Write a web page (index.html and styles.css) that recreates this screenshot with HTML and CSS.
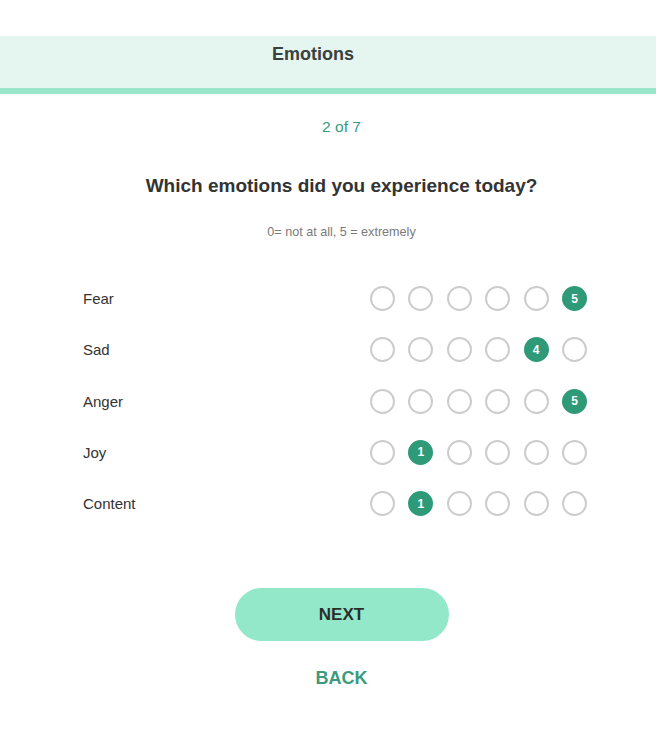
FILE: index.html
```html
<!DOCTYPE html>
<html>
<head>
<meta charset="utf-8">
<link rel="stylesheet" href="styles.css">
</head>
<body>
<div class="page">
  <header class="topbar"><h1 class="title">Emotions</h1></header>
  <div class="step shift">2 of 7</div>
  <h2 class="question shift">Which emotions did you experience today?</h2>
  <div class="hint shift">0= not at all, 5 = extremely</div>
  <div class="rows">
    <div class="row"><span class="label">Fear</span><div class="scale"><span class="dot"></span><span class="dot"></span><span class="dot"></span><span class="dot"></span><span class="dot"></span><span class="dot on">5</span></div></div>
    <div class="row"><span class="label">Sad</span><div class="scale"><span class="dot"></span><span class="dot"></span><span class="dot"></span><span class="dot"></span><span class="dot on">4</span><span class="dot"></span></div></div>
    <div class="row"><span class="label">Anger</span><div class="scale"><span class="dot"></span><span class="dot"></span><span class="dot"></span><span class="dot"></span><span class="dot"></span><span class="dot on">5</span></div></div>
    <div class="row"><span class="label">Joy</span><div class="scale"><span class="dot"></span><span class="dot on">1</span><span class="dot"></span><span class="dot"></span><span class="dot"></span><span class="dot"></span></div></div>
    <div class="row"><span class="label">Content</span><div class="scale"><span class="dot"></span><span class="dot on">1</span><span class="dot"></span><span class="dot"></span><span class="dot"></span><span class="dot"></span></div></div>
  </div>
  <button class="next shift">NEXT</button>
  <div class="back shift">BACK</div>
</div>
</body>
</html>
```
FILE: styles.css
```css
html, body {
  margin: 0;
  padding: 0;
  background: #ffffff;
}
body {
  font-family: "Liberation Sans", Arial, sans-serif;
  color: #333;
}
.page {
  padding-top: 36px;
  display: flex;
  flex-direction: column;
  align-items: center;
}
.shift {
  margin-left: 27px;
}
.topbar {
  align-self: stretch;
  height: 52px;
  box-sizing: content-box;
  background: #e5f6f0;
  border-bottom: 6px solid #99e6ca;
  display: flex;
  justify-content: center;
}
.title {
  margin: 8px 0 0 -30px;
  font-size: 18px;
  line-height: 21px;
  font-weight: bold;
  color: #3b403d;
}
.step {
  margin-top: 23.5px;
  font-size: 15.5px;
  line-height: 18px;
  color: #3a9b7d;
}
.question {
  margin-top: 39.5px;
  margin-bottom: 0;
  font-size: 19px;
  line-height: 22px;
  font-weight: bold;
  color: #333;
}
.hint {
  margin-top: 27.5px;
  font-size: 12.6px;
  line-height: 14px;
  color: #7a7a7a;
}
.rows {
  align-self: stretch;
  margin-top: 47.5px;
  padding: 0 69px 0 83px;
  display: flex;
  flex-direction: column;
  gap: 26.25px;
}
.row {
  display: flex;
  align-items: center;
  justify-content: space-between;
  height: 25px;
}
.label {
  font-size: 15px;
  color: #333;
}
.scale {
  display: flex;
  gap: 13.4px;
}
.dot {
  width: 25px;
  height: 25px;
  box-sizing: border-box;
  border: 2.5px solid #cccccc;
  border-radius: 50%;
  display: flex;
  align-items: center;
  justify-content: center;
  font-size: 12px;
  font-weight: bold;
  color: #fff;
}
.dot.on {
  background: #2e9a78;
  border-color: #2e9a78;
}
.next {
  margin-top: 72px;
  width: 214px;
  height: 53px;
  border: none;
  border-radius: 27px;
  background: #93e8c9;
  font-family: "Liberation Sans", Arial, sans-serif;
  font-size: 17px;
  font-weight: bold;
  color: #2a2f2c;
  padding: 0;
}
.back {
  margin-top: 26px;
  font-size: 18px;
  line-height: 22px;
  font-weight: bold;
  color: #3a9b7d;
}
```
